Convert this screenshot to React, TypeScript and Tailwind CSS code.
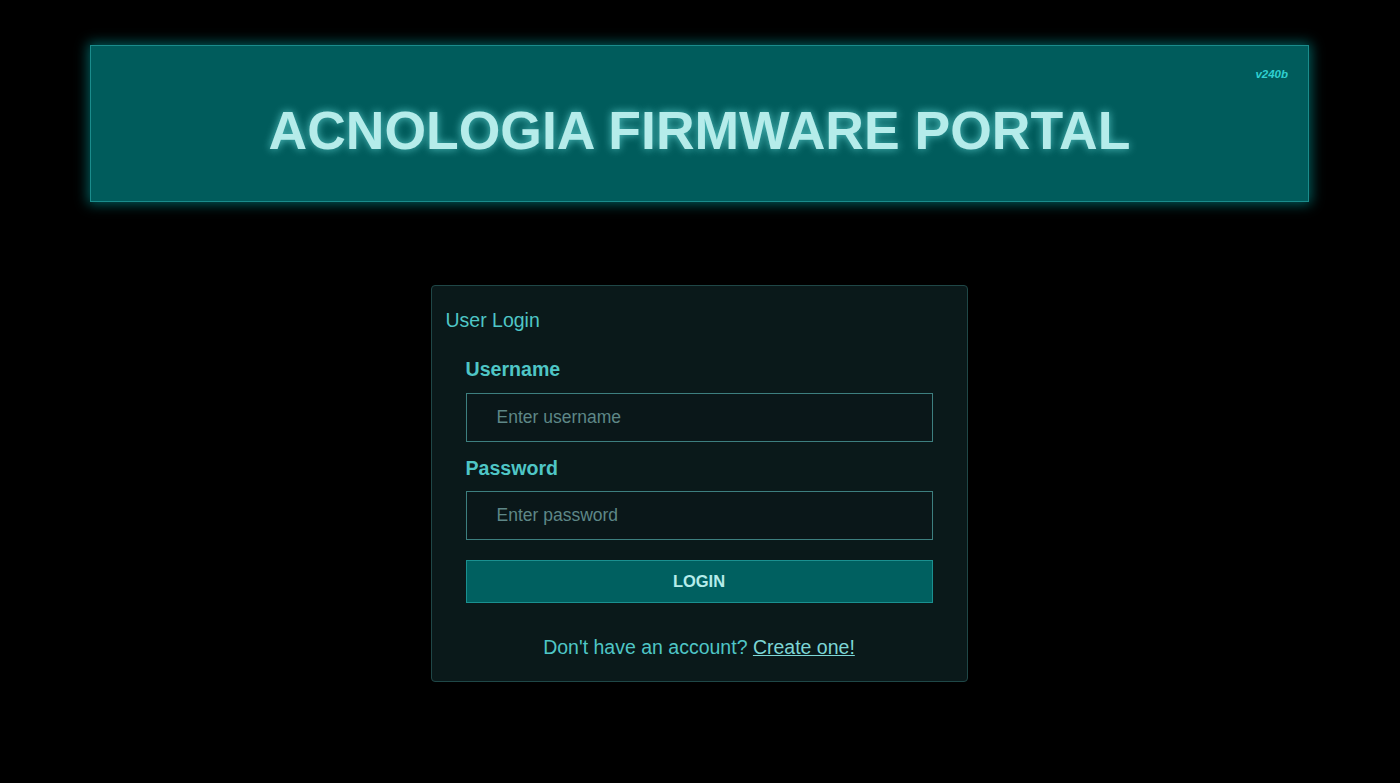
import React from "react";

export default function App() {
  return (
    <div
      className="min-h-[783px] w-full bg-black pt-[45px] px-[90px]"
      style={{ fontFamily: '"Liberation Sans", Arial, sans-serif' }}
    >
      <header className="relative h-[157px] w-[1219px] border border-[#1b8c8c] bg-[#005c5c] pt-[54px] shadow-[0_0_12px_2px_rgba(0,170,170,0.55)]">
        <span className="absolute right-[20px] top-[21px] text-[11.5px] font-bold italic leading-[14px] text-[#2fd0d0]">
          v240b
        </span>
        <h1
          className="text-center text-[53.5px] font-bold leading-[61px] text-[#b5ecea]"
          style={{ textShadow: "0 0 8px rgba(120,240,240,0.7)" }}
        >
          ACNOLOGIA FIRMWARE PORTAL
        </h1>
      </header>

      <div className="flex justify-center pr-[2px] pt-[83px]">
        <div className="w-[537px] rounded-[4px] border border-[#1f4747] bg-[#0a191a] px-[14px] pb-[22px] pt-[22px]">
          <h2 className="text-[19.5px] leading-[24px] text-[#4fc6c6]">User Login</h2>
          <div className="px-[20px] pt-[26px]">
            <label className="block text-[19.6px] font-bold leading-[22px] text-[#4fc6c6]">
              Username
            </label>
            <input
              placeholder="Enter username"
              className="mt-[13px] block h-[49px] w-full border border-[#3d7f7f] bg-[#0a1719] px-[30px] text-[17.5px] text-[#8fcfcf] outline-none placeholder:text-[#5e8787]"
            />
            <label className="mt-[15px] block text-[19.6px] font-bold leading-[22px] text-[#4fc6c6]">
              Password
            </label>
            <input
              type="password"
              placeholder="Enter password"
              className="mt-[12px] block h-[49px] w-full border border-[#3d7f7f] bg-[#0a1719] px-[30px] text-[17.5px] text-[#8fcfcf] outline-none placeholder:text-[#5e8787]"
            />
            <button className="mt-[20px] flex h-[43px] w-full items-center justify-center border border-[#1a9090] bg-[#006060] text-[16.5px] font-bold text-[#b5ecea]">
              LOGIN
            </button>
            <p className="mt-[33px] text-center text-[19.5px] leading-[23px] text-[#4fc6c6]">
              Don't have an account?{" "}
              <a href="#" className="text-[#7dd6d6] underline">
                Create one!
              </a>
            </p>
          </div>
        </div>
      </div>
    </div>
  );
}
